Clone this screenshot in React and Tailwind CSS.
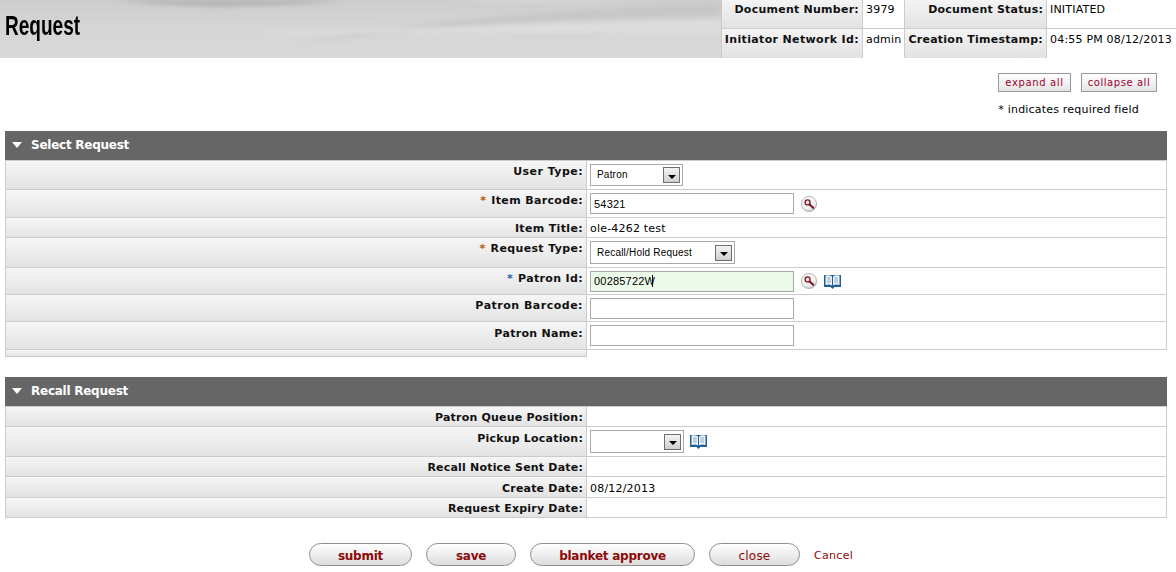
const verdana = "font-['DejaVu_Sans',Verdana,sans-serif]";

function Magnifier() {
  return (
    <svg width="18" height="18" viewBox="0 0 18 18" className="shrink-0">
      <defs>
        <radialGradient id="lens" cx="40%" cy="30%" r="75%">
          <stop offset="0%" stopColor="#ffffff" />
          <stop offset="70%" stopColor="#eeeeee" />
          <stop offset="100%" stopColor="#b5b5b5" />
        </radialGradient>
      </defs>
      <circle cx="9" cy="9" r="7.6" fill="url(#lens)" stroke="#a8a8a8" strokeWidth="0.8" />
      <circle cx="7.6" cy="7.4" r="2.5" fill="#f3e3e3" stroke="#7a1420" strokeWidth="1.3" />
      <path d="M9.6 9.5 L13.2 12.8" stroke="#7a1420" strokeWidth="2.1" strokeLinecap="round" />
    </svg>
  );
}

function Book() {
  return (
    <svg width="17" height="15" viewBox="0 0 17 15" className="shrink-0">
      <path d="M0 1 H17 V13 H10.5 L8.5 15 L6.5 13 H0 Z" fill="#1f5f98" />
      <path d="M1.5 1.5 Q5.5 0.5 8 2.5 V11.5 Q5.5 10 1.5 11 Z" fill="#f0f4f7" />
      <path d="M15.5 1.5 Q11.5 0.5 9 2.5 V11.5 Q11.5 10 15.5 11 Z" fill="#f0f4f7" />
      <path d="M3 4 H6.8 M3 6 H6.8 M3 8 H6.8 M10.2 4 H14 M10.2 6 H14 M10.2 8 H14" stroke="#8fa9bf" strokeWidth="1" />
    </svg>
  );
}

function Select({ value, width, height = "h-[23px]", textPad = "" }) {
  return (
    <div className={`flex items-center justify-between border border-[#a8a8a8] bg-white pl-[6px] pr-[2px] font-['Liberation_Sans',Arial,sans-serif] text-[10px] text-black ${width} ${height}`}>
      <span className={textPad}>{value}</span>
      <span className="flex h-[16px] w-[17px] items-center justify-center border border-[#6f6f6f] bg-gradient-to-b from-[#f4f4f4] to-[#cfcfcf]">
        <span className="mt-[3px] h-0 w-0 border-x-[4px] border-t-[4px] border-x-transparent border-t-black" />
      </span>
    </div>
  );
}

function TextField({ value, green, caret }) {
  return (
    <div className="relative">
      <input
        readOnly
        value={value}
        className={`block h-[21px] w-[204px] border border-[#a8a8a8] px-[3px] font-['Liberation_Sans',Arial,sans-serif] text-[11px] text-black outline-none ${green ? "bg-[#ecfbe9]" : "bg-white"}`}
      />
      {caret && <span className="absolute left-[62px] top-[4px] h-[12px] w-px bg-black" />}
    </div>
  );
}

function Row({ label, req, reqBlue, height, children, top = "pt-[3px]", tracking = "tracking-[0.35px]" }) {
  return (
    <div className={`flex border-b border-[#cccccc] ${height}`}>
      <div className={`w-[581px] shrink-0 border-r border-[#cccccc] bg-gradient-to-b from-[#f6f6f6] to-[#e3e3e3] pr-[3px] text-right text-[11px] font-bold text-[#111] ${top} ${tracking}`}>
        {req && <span className={`mr-[5px] ${reqBlue ? "text-[#1f5fa8]" : "text-[#b8560b]"}`}>*</span>}
        {label}
      </div>
      <div className="flex min-w-0 flex-1 items-center gap-[6px] pl-[3px] text-[11px] tracking-[0.2px] text-black">
        {children}
      </div>
    </div>
  );
}

function Section({ title, children }) {
  return (
    <section className="ml-[5px] mr-[9px]">
      <div className="flex h-[29px] items-center gap-[9px] bg-[#666666] pb-[2px] pl-[7px] text-[12px] font-bold tracking-[-0.25px] text-white">
        <span className="h-0 w-0 border-x-[5px] border-t-[6px] border-x-transparent border-t-white" />
        {title}
      </div>
      <div className="border-x border-t border-[#cccccc]">{children}</div>
    </section>
  );
}

function MetaLabel({ children, top = "pt-[2px]", tracking = "tracking-[0.25px]" }) {
  return (
    <div className={`flex h-full items-start justify-end border-l border-[#cccccc] bg-gradient-to-b from-[#f4f4f4] to-[#e2e2e2] pr-[3px] font-bold text-[#111] ${top} ${tracking}`}>
      {children}
    </div>
  );
}

function MetaValue({ children, top = "pt-[2px]" }) {
  return <div className={`h-full border-l border-[#cccccc] bg-white pl-[3px] tracking-[0.2px] text-black ${top}`}>{children}</div>;
}

function ActionButton({ children, width, bold = true }) {
  return (
    <button
      type="button"
      className={`h-[23px] rounded-full border border-[#8f8f8f] bg-gradient-to-b from-[#ffffff] to-[#dddddd] pt-[2px] text-[12px] text-[#8b0a0a] ${bold ? "font-bold tracking-[-0.25px]" : "tracking-[0.2px]"} ${width}`}
    >
      {children}
    </button>
  );
}

export default function App() {
  return (
    <div className={`h-[572px] w-[1176px] overflow-hidden bg-white ${verdana}`}>
      {/* Header */}
      <header className="relative flex h-[58px] justify-between overflow-hidden bg-gradient-to-b from-[#cdcdcd] via-[#d6d6d6] to-[#d9d9d9]">
        <svg className="absolute inset-0 h-full w-[721px] blur-[2px]" viewBox="0 0 721 58" preserveAspectRatio="none">
          <path d="M90 -4 C170 10 270 10 380 -4 Z" fill="#b4b4b4" />
          <path d="M380 -4 C480 4 600 4 721 -4 Z" fill="#e2e2e2" />
          <path d="M300 44 C400 22 540 10 721 4 L721 16 C580 18 420 26 300 44 Z" fill="#bfbfbf" opacity="0.55" />
          <path d="M230 34 C340 30 520 24 721 20 L721 34 C560 30 380 34 230 34 Z" fill="#e0e0e0" opacity="0.7" />
        </svg>
        <h1 className="relative ml-[5px] mt-[9px] origin-left scale-x-[0.68] font-['Liberation_Sans',sans-serif] text-[28px] font-bold leading-[34px] text-black">
          Request
        </h1>
        <div className="relative grid h-[58px] w-[455px] grid-cols-[141px_42px_142px_130px] grid-rows-[29px_29px] border-b border-[#cccccc] text-[11px]">
          <div className="col-span-4 grid grid-cols-subgrid border-b border-[#cccccc]">
            <MetaLabel>Document Number:</MetaLabel>
            <MetaValue>3979</MetaValue>
            <MetaLabel tracking="tracking-[0.2px]">Document Status:</MetaLabel>
            <MetaValue>INITIATED</MetaValue>
          </div>
          <div className="col-span-4 grid grid-cols-subgrid">
            <MetaLabel top="pt-[3px]" tracking="tracking-[0.35px]">Initiator Network Id:</MetaLabel>
            <MetaValue top="pt-[3px]">admin</MetaValue>
            <MetaLabel top="pt-[3px]">Creation Timestamp:</MetaLabel>
            <MetaValue top="pt-[3px]">04:55 PM 08/12/2013</MetaValue>
          </div>
        </div>
      </header>

      {/* Expand / collapse */}
      <div className="flex h-[73px] flex-col items-end pr-[19px] pt-[15px]">
        <div className="flex gap-[10px]">
          <button type="button" className="h-[19px] w-[73px] border border-[#999] bg-gradient-to-b from-white to-[#e4e4e4] text-[10px] tracking-[0.65px] text-[#a00030]">
            expand all
          </button>
          <button type="button" className="h-[19px] w-[76px] border border-[#999] bg-gradient-to-b from-white to-[#e4e4e4] text-[10px] tracking-[0.55px] text-[#a00030]">
            collapse all
          </button>
        </div>
        <p className="mr-[18px] mt-[10px] text-[11px] tracking-[0.2px] text-black">* indicates required field</p>
      </div>

      <Section title="Select Request">
        <Row label="User Type:" height="h-[29px]" tracking="tracking-[0.45px]">
          <Select value="Patron" width="w-[93px]" height="h-[22px]" textPad="pb-[2px]" />
        </Row>
        <Row label="Item Barcode:" req height="h-[28px]">
          <TextField value="54321" />
          <Magnifier />
        </Row>
        <Row label="Item Title:" height="h-[20px]">
          <span className="pt-[4px]">ole-4262 test</span>
        </Row>
        <Row label="Request Type:" req height="h-[30px]">
          <Select value="Recall/Hold Request" width="w-[145px]" />
        </Row>
        <Row label="Patron Id:" req reqBlue height="h-[27px]">
          <TextField value="00285722W" green caret />
          <Magnifier />
          <Book />
        </Row>
        <Row label="Patron Barcode:" height="h-[27px]" tracking="tracking-[0.5px]">
          <TextField value="" />
        </Row>
        <Row label="Patron Name:" height="h-[28px]" top="pt-[4px]" tracking="tracking-[0.3px]">
          <TextField value="" />
        </Row>
      </Section>
      <div className="ml-[5px] h-[7px] w-[582px] border-x border-b border-[#cccccc] bg-gradient-to-b from-[#f6f6f6] to-[#e3e3e3]" />

      <div className="h-[20px]" />

      <Section title="Recall Request">
        <Row label="Patron Queue Position:" height="h-[20px]" tracking="tracking-[0.2px]" />
        <Row label="Pickup Location:" height="h-[30px]" top="pt-[4px]" tracking="tracking-[0.2px]">
          <Select value="" width="w-[94px]" />
          <Book />
        </Row>
        <Row label="Recall Notice Sent Date:" height="h-[20px]" tracking="tracking-[0.2px]" />
        <Row label="Create Date:" height="h-[21px]" top="pt-[4px]" tracking="tracking-[0.2px]">
          <span className="pt-[4px]">08/12/2013</span>
        </Row>
        <Row label="Request Expiry Date:" height="h-[20px]" tracking="tracking-[0.2px]" />
      </Section>

      {/* Actions */}
      <div className="ml-[309px] mt-[25px] flex items-center gap-[14px]">
        <ActionButton width="w-[103px]">submit</ActionButton>
        <ActionButton width="w-[90px]">save</ActionButton>
        <ActionButton width="w-[165px]">blanket approve</ActionButton>
        <ActionButton width="w-[91px]" bold={false}>close</ActionButton>
        <a href="#cancel" className="pt-[4px] text-[11px] tracking-[0.3px] text-[#8b0a0a]">Cancel</a>
      </div>
    </div>
  );
}
